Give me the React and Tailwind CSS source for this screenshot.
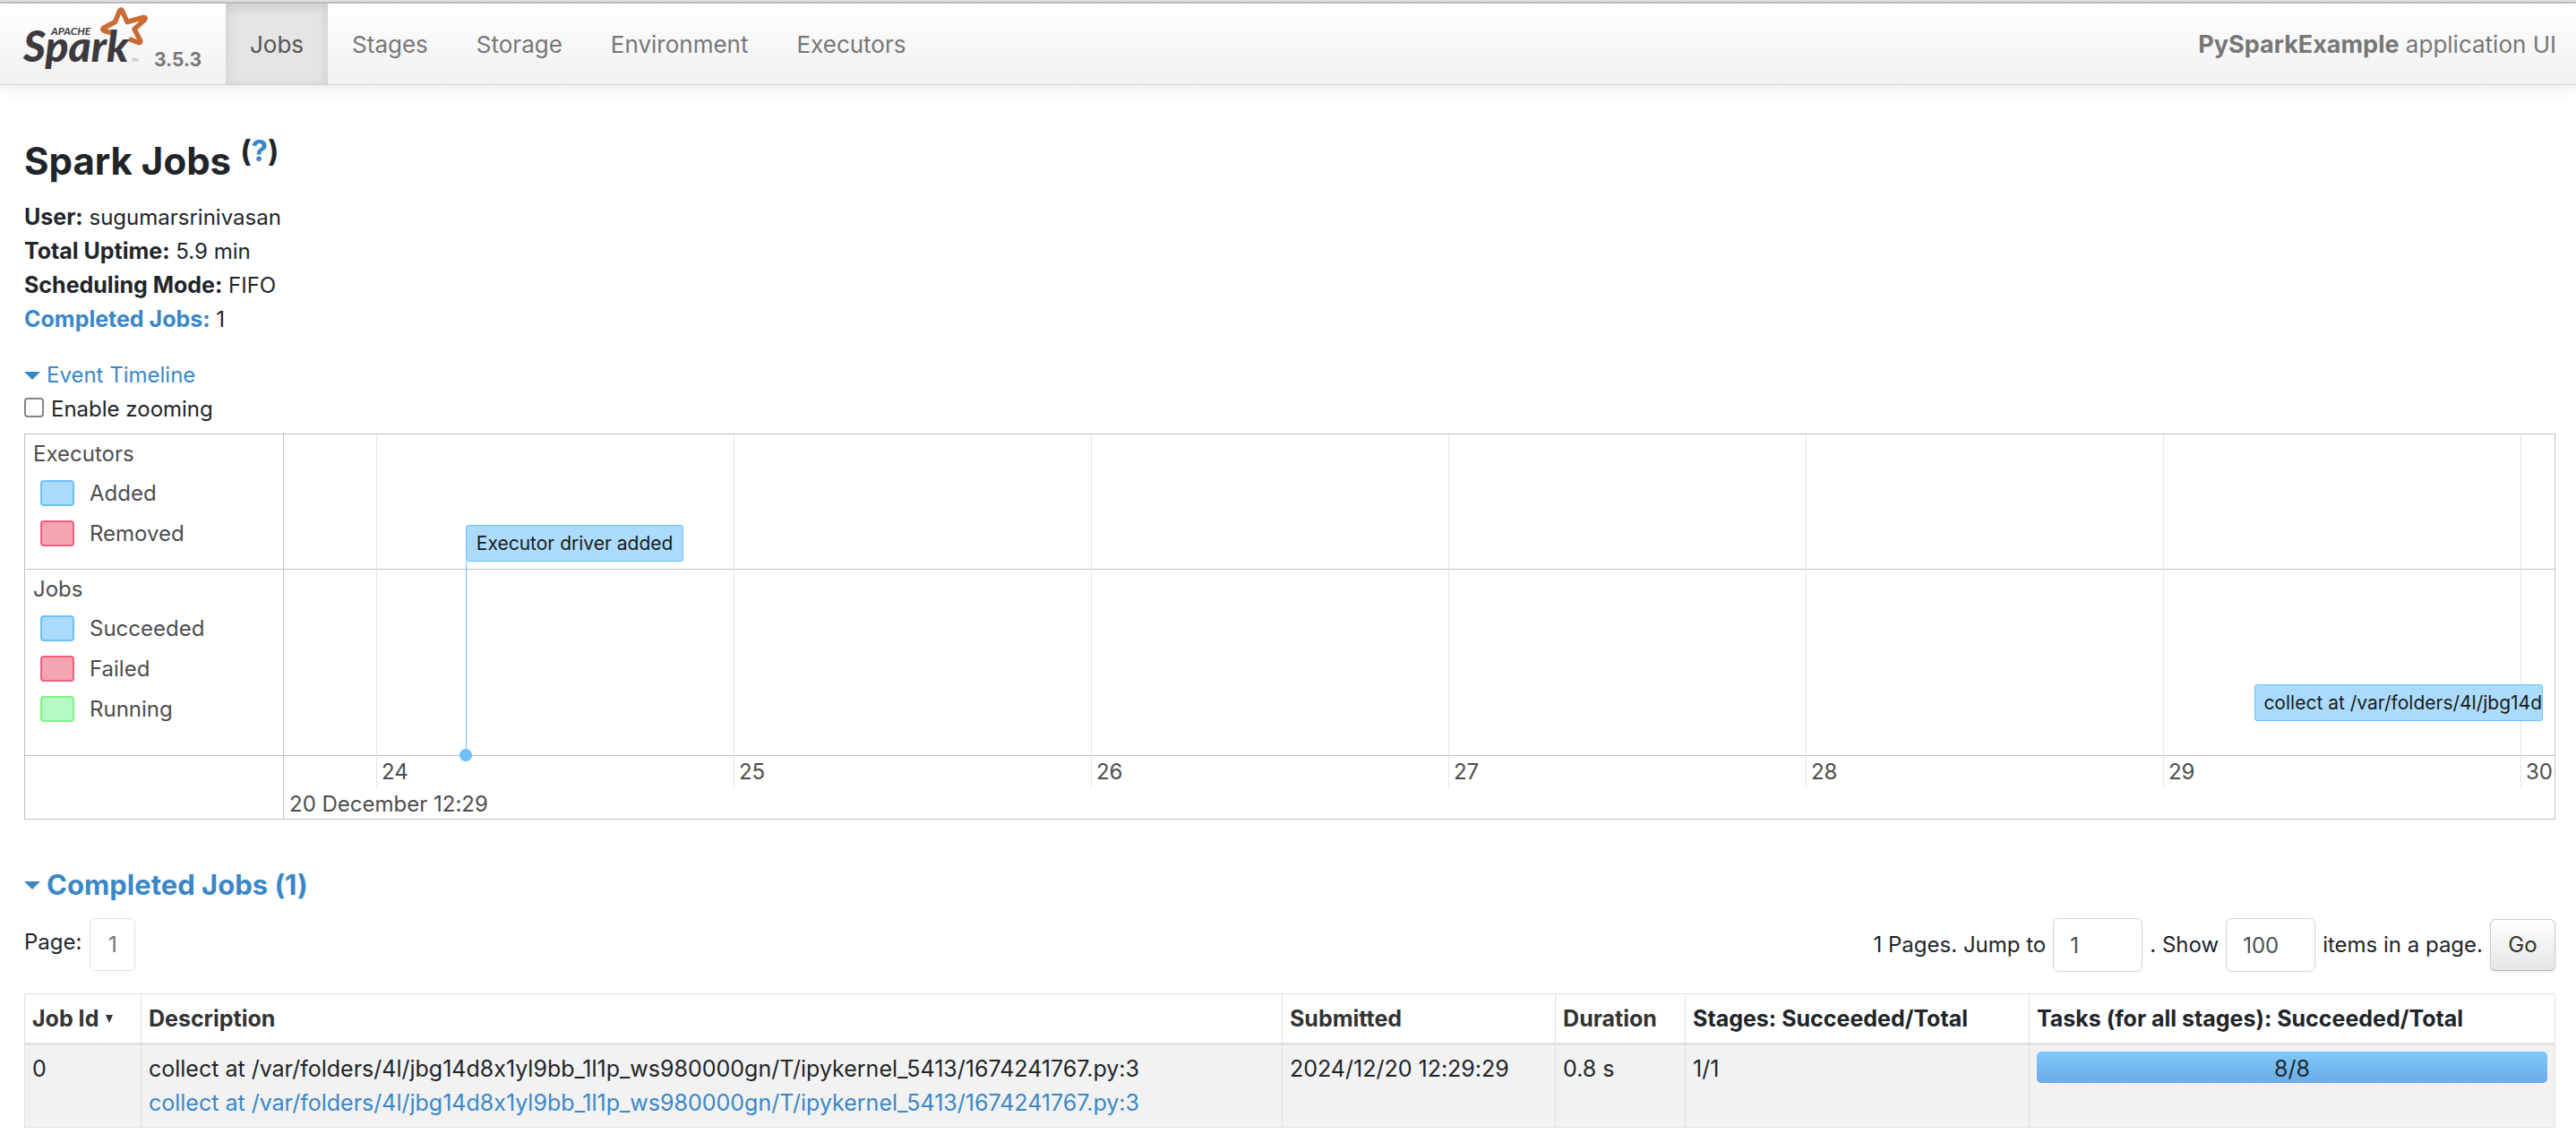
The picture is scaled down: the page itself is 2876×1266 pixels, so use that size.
import React from "react";

const NAV = ["Jobs", "Stages", "Storage", "Environment", "Executors"];

const TICKS = [
  { label: "24", left: 4.06 },
  { label: "25", left: 19.8 },
  { label: "26", left: 35.54 },
  { label: "27", left: 51.28 },
  { label: "28", left: 67.02 },
  { label: "29", left: 82.76 },
  { label: "30", left: 98.5 },
];

const SWATCH = {
  blue: "border-[#6dbffa] bg-[#acdcfd]",
  red: "border-[#ee6178] bg-[#f3a5b1]",
  green: "border-[#82f088] bg-[#b5fbc3]",
};

const JOB_NAME =
  "collect at /var/folders/4l/jbg14d8x1yl9bb_1l1p_ws980000gn/T/ipykernel_5413/1674241767.py:3";

function Logo() {
  return (
    <svg
      viewBox="0 0 140 80"
      className="h-[80px] w-[140px] shrink-0"
      role="img"
      aria-label="Apache Spark"
    >
      <path
        d="M104 34 L90.500 30.500 Q87 29 90 27 L102.500 20.500 L107.500 8 Q109 5.500 110.500 8 L116 20.500 L134 15.500 Q137.500 15 135.500 18 L124 28.500 L130.500 41 Q131.500 44.500 128.500 43.500 L118 39.500"
        fill="none"
        stroke="#cb6b34"
        strokeWidth="5.500"
        strokeLinejoin="round"
      />
      <g fontFamily="Lato, sans-serif" fontStyle="italic" fill="#3c3a3e">
        <text x="31" y="35" fontSize="12" fontWeight="700">
          APACHE
        </text>
        <text x="0" y="65" fontSize="48" fontWeight="900">
          Spark
        </text>
        <text x="121" y="65" fontSize="5" fillOpacity="0.6">
          TM
        </text>
      </g>
    </svg>
  );
}

function Caret() {
  return (
    <svg viewBox="0 0 18 9" className="h-[9px] w-[18px]" aria-hidden="true">
      <path d="M0 0h18L9 9z" fill="currentColor" />
    </svg>
  );
}

function Legend({ title, items }) {
  return (
    <div className="px-[9px] pt-[3px]">
      <div className="leading-[38px]">{title}</div>
      <ul className="flex flex-col pt-[2px] pl-2">
        {items.map(([label, color]) => (
          <li key={label} className="flex h-[45px] items-center gap-[17px]">
            <span
              className={`h-[29px] w-[38px] rounded-[4px] border-2 ${SWATCH[color]}`}
            />
            {label}
          </li>
        ))}
      </ul>
    </div>
  );
}

function Timeline() {
  return (
    <div className="mt-2 grid grid-cols-[289px_1fr] border border-[#bfbfbf] text-[24px] text-[#4d4d4d]">
      <div className="border-r border-[#bfbfbf]">
        <div className="h-[151px] border-b border-[#bfbfbf]">
          <Legend
            title="Executors"
            items={[
              ["Added", "blue"],
              ["Removed", "red"],
            ]}
          />
        </div>
        <div className="h-[208px] border-b border-[#bfbfbf]">
          <Legend
            title="Jobs"
            items={[
              ["Succeeded", "blue"],
              ["Failed", "red"],
              ["Running", "green"],
            ]}
          />
        </div>
        <div className="h-[70px]" />
      </div>

      <div className="relative overflow-hidden">
        {TICKS.map((t) => (
          <div
            key={t.label}
            className="absolute top-0 flex h-[395px] items-end border-l border-[#e5e5e5] pl-[5px] leading-9"
            style={{ left: `${t.left}%` }}
          >
            {t.label}
          </div>
        ))}
        <div className="h-[151px] border-b border-[#bfbfbf]" />
        <div className="h-[208px] border-b border-[#bfbfbf]" />
        <div className="flex h-[70px] items-end pl-[6px] leading-[32px]">
          20 December 12:29
        </div>

        <div className="absolute top-[101px] left-[8%] h-[41px] rounded-[3px] border border-[#6dbffa] bg-[#acdcfd] px-[11px] text-[21px] leading-[39px] text-[#1a1a1a]">
          Executor driver added
        </div>
        <div className="absolute top-[142px] left-[8%] flex h-[217px] w-px justify-center bg-[#6dbffa]">
          <span className="mt-[209px] h-[14px] w-[14px] shrink-0 rounded-full bg-[#6dbffa]" />
        </div>
        <div className="absolute top-[279px] left-[86.8%] h-[41px] w-[12.7%] overflow-hidden rounded-[3px] border border-[#6dbffa] bg-[#acdcfd] pl-[9px] text-[21px] leading-[39px] whitespace-nowrap text-[#1a1a1a]">
          {JOB_NAME}
        </div>
      </div>
    </div>
  );
}

function Pagination() {
  const field =
    "h-[60px] w-[100px] rounded-[6px] border border-[#ced4da] bg-white px-[18px] text-[#495057]";
  return (
    <div className="mt-[18px] flex items-start justify-between">
      <div className="flex gap-[9px]">
        <span className="pt-2 leading-[38px]">Page:</span>
        <a
          href="#page-1"
          className="flex h-[59px] w-[51px] items-center justify-center rounded-[6px] border border-[#dee2e6] text-[#6c757d]"
        >
          1
        </a>
      </div>
      <form
        className="flex items-center gap-2"
        onSubmit={(e) => e.preventDefault()}
      >
        <label htmlFor="jump">1 Pages. Jump to</label>
        <input id="jump" type="text" defaultValue="1" className={field} />
        <label htmlFor="size">. Show</label>
        <input
          id="size"
          type="text"
          defaultValue="100"
          aria-label="Items in a page"
          className={field}
        />
        <span>items in a page.</span>
        <button
          type="submit"
          className="h-[58px] w-[73px] rounded-[6px] border border-[#cccccc] border-b-[#b3b3b3] bg-linear-to-b from-white to-[#e6e6e6] text-[#333333] shadow-[0_2px_4px_rgba(0,0,0,0.08)]"
        >
          Go
        </button>
      </form>
    </div>
  );
}

function JobsTable() {
  const th =
    "border border-b-3 border-[#dee2e6] px-[8px] py-2 text-left font-bold leading-[38px]";
  const td =
    "border border-[#dee2e6] px-[8px] pt-[7px] pb-2 align-top leading-[38px]";
  return (
    <table className="mt-6 w-full table-fixed border-collapse text-[25px]">
      <colgroup>
        <col className="w-[4.6%]" />
        <col className="w-[45.1%]" />
        <col className="w-[10.8%]" />
        <col className="w-[5.13%]" />
        <col className="w-[13.59%]" />
        <col />
      </colgroup>
      <thead>
        <tr>
          <th className={th}>
            <a href="#id" className="flex items-center gap-2 text-[#333333]">
              Job Id
              <svg viewBox="0 0 8 9" className="h-[9px] w-2" aria-hidden="true">
                <path d="M0 0h8L4 9z" fill="currentColor" />
              </svg>
            </a>
          </th>
          <th className={th}>
            <a href="#description" className="text-[#333333]">
              Description
            </a>
          </th>
          <th className={th}>
            <a href="#submitted" className="text-[#333333]">
              Submitted
            </a>
          </th>
          <th className={th}>
            <a href="#duration" className="text-[#333333]">
              Duration
            </a>
          </th>
          <th className={th}>Stages: Succeeded/Total</th>
          <th className={th}>Tasks (for all stages): Succeeded/Total</th>
        </tr>
      </thead>
      <tbody>
        <tr className="bg-[#f2f2f2]">
          <td className={td}>0</td>
          <td className={td}>
            <div>{JOB_NAME}</div>
            <a href="#job-0" className="block text-[#3a87c8]">
              {JOB_NAME}
            </a>
          </td>
          <td className={td}>2024/12/20 12:29:29</td>
          <td className={td}>0.8 s</td>
          <td className={td}>1/1</td>
          <td className={td}>
            <div className="h-[35px] rounded-[5px] bg-linear-to-b from-[#80c9fa] to-[#6aabe8] text-center">
              8/8
            </div>
          </td>
        </tr>
      </tbody>
    </table>
  );
}

export default function App() {
  return (
    <div className="min-h-screen bg-white font-['Inter',sans-serif] text-[24px] leading-[38px] text-[#212529] [font-feature-settings:'calt'_0]">
      <div className="h-1 border-t-2 border-b-2 border-t-[#e5e5e5] border-b-[#c4c4c4]" />
      <nav className="flex h-[91px] items-stretch border-b border-[#d4d4d4] bg-linear-to-b from-white to-[#f1f1f1] text-[26px] text-[#777777] shadow-[0_2px_18px_rgba(0,0,0,0.1)]">
        <a href="#home" className="flex w-[252px] items-start gap-[6px] pl-[26px]">
          <Logo />
          <span className="pt-11 text-[21px] font-bold">3.5.3</span>
        </a>
        <ul className="flex flex-1">
          {NAV.map((item, i) => (
            <li key={item} className="flex">
              <a
                href={`#${item.toLowerCase()}`}
                className={
                  i === 0
                    ? "flex items-center bg-[#e5e5e5] px-[27px] pt-[2px] text-[#555555] shadow-[inset_0_4px_14px_rgba(0,0,0,0.125)]"
                    : "flex items-center px-[27px] pt-[2px]"
                }
              >
                {item}
              </a>
            </li>
          ))}
        </ul>
        <div className="flex items-center pt-[2px] pr-[22px] whitespace-pre">
          <strong className="text-[27px]">PySparkExample</strong> application UI
        </div>
      </nav>

      <main className="pt-[58px] pr-[23px] pl-[27px]">
        <h1 className="flex items-start gap-[10px] text-[42px] leading-[53px] font-bold">
          Spark Jobs
          <sup className="top-0 text-[33px] leading-[30px]">
            (
            <a href="#help" className="text-[#3a87c8]">
              ?
            </a>
            )
          </sup>
        </h1>

        <ul className="mt-[17px]">
          <li className="h-[38px]">
            <strong className="text-[25px]">User:</strong> sugumarsrinivasan
          </li>
          <li className="h-[38px]">
            <strong className="text-[25px]">Total Uptime:</strong> 5.9 min
          </li>
          <li className="h-[38px]">
            <strong className="text-[25px]">Scheduling Mode:</strong> FIFO
          </li>
          <li className="h-[38px]">
            <a href="#completed" className="text-[25px] font-bold text-[#3a87c8]">
              Completed Jobs:
            </a>{" "}
            1
          </li>
        </ul>

        <button
          type="button"
          className="mt-[25px] flex items-center gap-[7px] text-[#3a87c8]"
        >
          <Caret />
          Event Timeline
        </button>
        <label className="flex items-center gap-2">
          <input
            type="checkbox"
            className="mb-1 h-[22px] w-[22px] appearance-none rounded-[4px] border-2 border-[#858585] bg-white"
          />
          Enable zooming
        </label>

        <Timeline />

        <h2
          id="completed"
          className="mt-[54px] text-[31px] leading-[38px] font-bold text-[#3a87c8]"
        >
          <button type="button" className="flex items-center gap-[7px]">
            <Caret />
            Completed Jobs (1)
          </button>
        </h2>

        <Pagination />
        <JobsTable />
      </main>
    </div>
  );
}
